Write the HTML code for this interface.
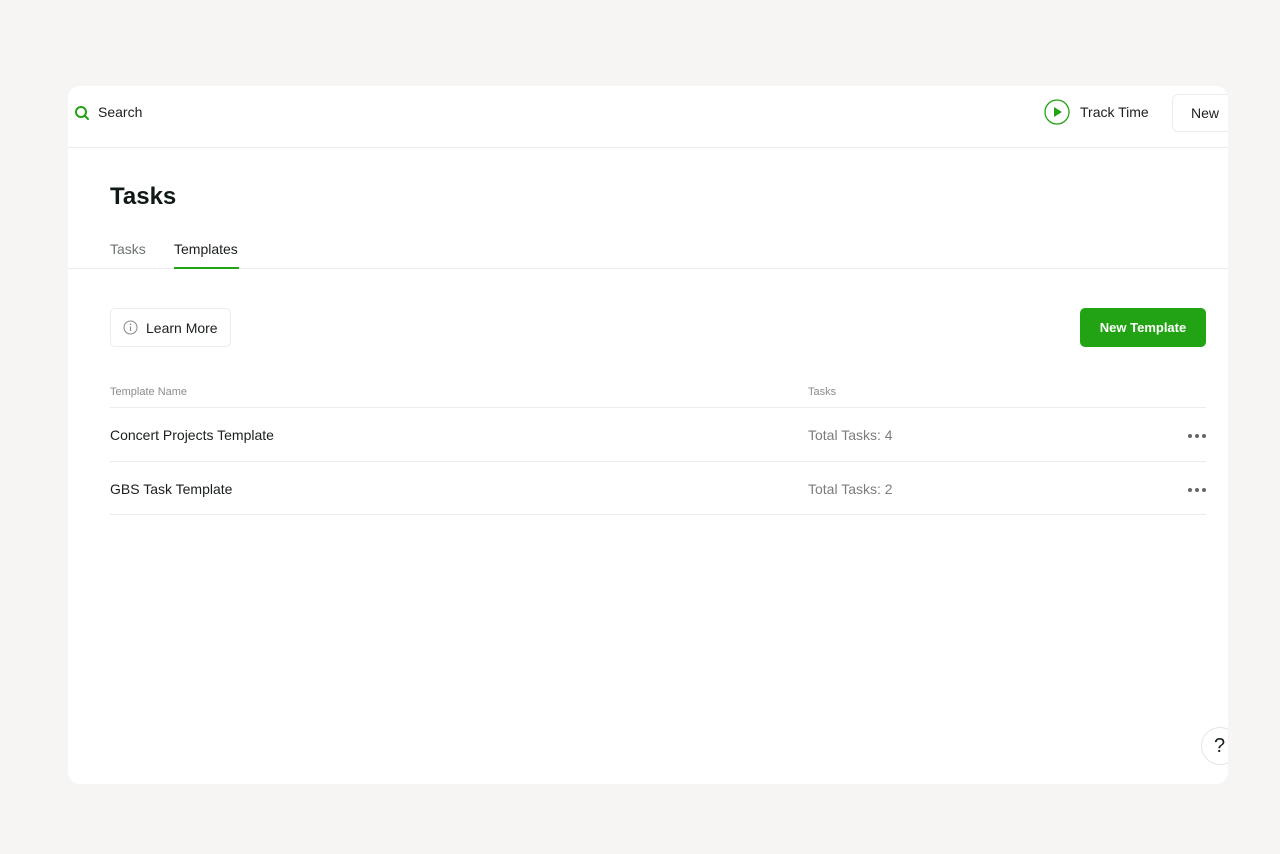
<!DOCTYPE html>
<html><head><style>
*{box-sizing:border-box;margin:0;padding:0}
body{width:1280px;height:854px;background:#f6f5f3;font-family:"Liberation Sans",sans-serif;color:#1a1f1c;position:relative;overflow:hidden}
.card{position:absolute;left:68px;top:86px;width:1160px;height:698px;background:#fff;border-radius:12px;overflow:hidden}
.top{height:62px;border-bottom:1px solid #ececea;position:relative}
.abs{position:absolute}
.t14{font-size:14px}
.row{position:absolute;left:42px;width:1096px;border-bottom:1px solid #ececea}
.dots{position:absolute;right:0;top:26px;width:18px;height:4px}
.dots i{position:absolute;top:0;width:4px;height:4px;border-radius:50%;background:#666}
</style></head><body>
<div class="card">
 <div class="top">
  <svg class="abs" style="left:6px;top:19px" width="16" height="16" viewBox="0 0 16 16"><circle cx="7" cy="7" r="5" fill="none" stroke="#22a313" stroke-width="2"/><path d="M11 11l3 3" stroke="#22a313" stroke-width="2" stroke-linecap="round"/></svg>
  <div class="abs t14" style="left:30px;top:18px">Search</div>
  <svg class="abs" style="left:976px;top:13px" width="26" height="26" viewBox="0 0 26 26"><circle cx="13" cy="13" r="12" fill="none" stroke="#22a313" stroke-width="1.3"/><path d="M10 8l8 5-8 5z" fill="#22a313"/></svg>
  <div class="abs t14" style="left:1012px;top:18px">Track Time</div>
  <div class="abs" style="left:1104px;top:8px;width:70px;height:38px;border:1px solid #ececea;border-radius:6px;font-size:14px;padding:10px 0 0 18px">New</div>
 </div>
 <div class="abs" style="left:42px;top:97px;font-size:24px;font-weight:bold;color:#101a14">Tasks</div>
 <div class="abs t14" style="left:42px;top:155px;color:#6e7370">Tasks</div>
 <div class="abs t14" style="left:106px;top:155px;color:#1a1f1c">Templates</div>
 <div class="abs" style="left:0;top:182px;width:1160px;height:1px;background:#ececea"></div>
 <div class="abs" style="left:106px;top:181px;width:65px;height:2px;background:#22a313"></div>
 <div class="abs" style="left:42px;top:222px;width:121px;height:39px;border:1px solid #ececea;border-radius:5px">
  <svg class="abs" style="left:12px;top:11px" width="15" height="15" viewBox="0 0 15 15"><circle cx="7.5" cy="7.5" r="6.5" fill="none" stroke="#888" stroke-width="1"/><path d="M7.5 6.5v4.5" stroke="#888" stroke-width="1.2"/><circle cx="7.5" cy="4.3" r=".8" fill="#888"/></svg>
  <div class="abs t14" style="left:35px;top:11px">Learn More</div>
 </div>
 <div class="abs" style="left:1012px;top:222px;width:126px;height:39px;background:#22a313;border-radius:5px;color:#fff;font-size:13px;font-weight:bold;text-align:center;line-height:39px">New Template</div>
 <div class="abs" style="left:42px;top:300px;font-size:11px;color:#8a8d8b">Template Name</div>
 <div class="abs" style="left:740px;top:300px;font-size:11px;color:#8a8d8b">Tasks</div>
 <div class="row" style="top:321px;height:1px"></div>
 <div class="row" style="top:322px;height:54px">
  <div class="abs t14" style="left:0;top:19px">Concert Projects Template</div>
  <div class="abs t14" style="left:698px;top:19px;color:#7a7d7b">Total Tasks: 4</div>
  <div class="dots"><i style="left:0"></i><i style="left:7px"></i><i style="left:14px"></i></div>
 </div>
 <div class="row" style="top:376px;height:53px">
  <div class="abs t14" style="left:0;top:19px">GBS Task Template</div>
  <div class="abs t14" style="left:698px;top:19px;color:#7a7d7b">Total Tasks: 2</div>
  <div class="dots"><i style="left:0"></i><i style="left:7px"></i><i style="left:14px"></i></div>
 </div>
 <div class="abs" style="left:1133px;top:641px;width:38px;height:38px;border:1px solid #e5e5e3;border-radius:50%;background:#fff;font-size:20px;padding:7px 0 0 12px">?</div>
</div>
</body></html>
